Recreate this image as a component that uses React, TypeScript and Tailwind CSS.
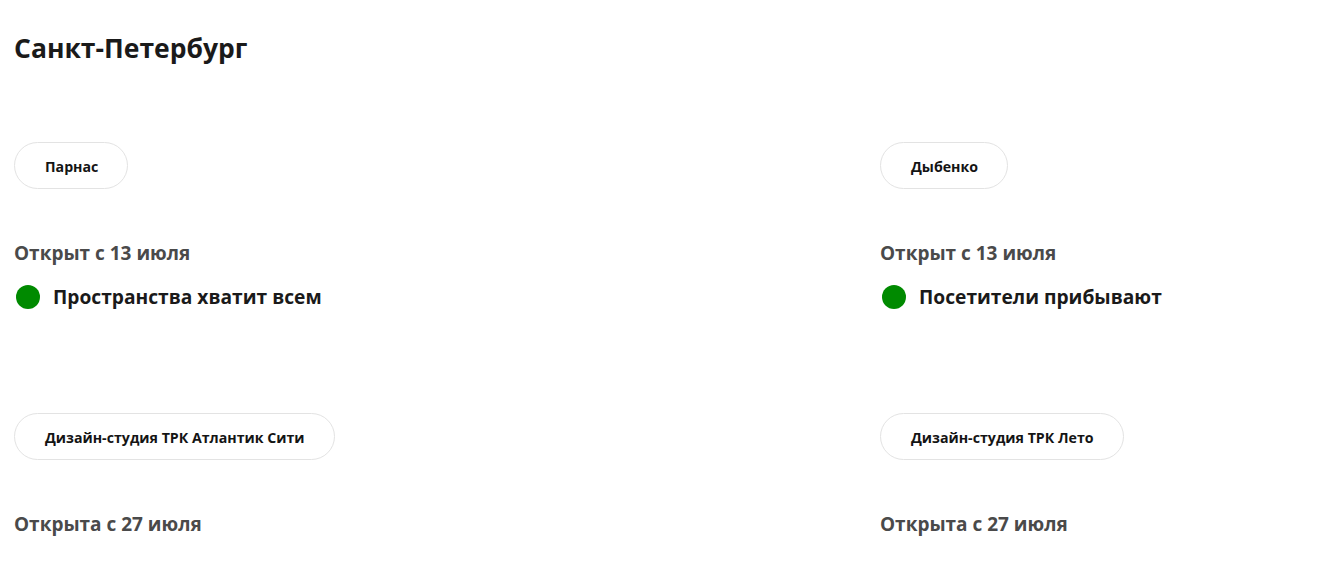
import React from "react";

type Item = { name: string; date: string; status?: string };

const rows: Item[][] = [
  [
    { name: "Парнас", date: "Открыт с 13 июля", status: "Пространства хватит всем" },
    { name: "Дыбенко", date: "Открыт с 13 июля", status: "Посетители прибывают" },
  ],
  [
    { name: "Дизайн-студия ТРК Атлантик Сити", date: "Открыта с 27 июля" },
    { name: "Дизайн-студия ТРК Лето", date: "Открыта с 27 июля" },
  ],
];

function Card({ item }: { item: Item }) {
  return (
    <div className="flex flex-col items-start">
      <div className="h-[47px] pl-[30px] pr-[29px] pt-[2px] rounded-full border border-[#e3e3e3] bg-white flex items-center text-[14.2px] font-bold text-[#141414]">
        {item.name}
      </div>
      <div className="mt-[52px] text-[19px] leading-[24px] font-bold text-[#4a4a4a]">{item.date}</div>
      {item.status && (
        <div className="mt-[20px] flex items-center">
          <span className="w-[24px] h-[24px] rounded-full bg-[#008a00] ml-[2px]" />
          <span className="ml-[13px] text-[19.2px] leading-[24px] font-bold text-[#1a1a1a]">{item.status}</span>
        </div>
      )}
    </div>
  );
}

export default function App() {
  return (
    <div
      className="min-h-[587px] bg-white pl-[14px] pt-[30px]"
      style={{ fontFamily: '"Open Sans", sans-serif' }}
    >
      <h1 className="text-[26.5px] leading-[36px] font-bold text-[#1a1a1a]">Санкт-Петербург</h1>
      <div className="mt-[76px] flex flex-col gap-[104px]">
        {rows.map((row, i) => (
          <div key={i} className="grid grid-cols-[866px_1fr]">
            {row.map((item) => (
              <Card key={item.name} item={item} />
            ))}
          </div>
        ))}
      </div>
    </div>
  );
}
